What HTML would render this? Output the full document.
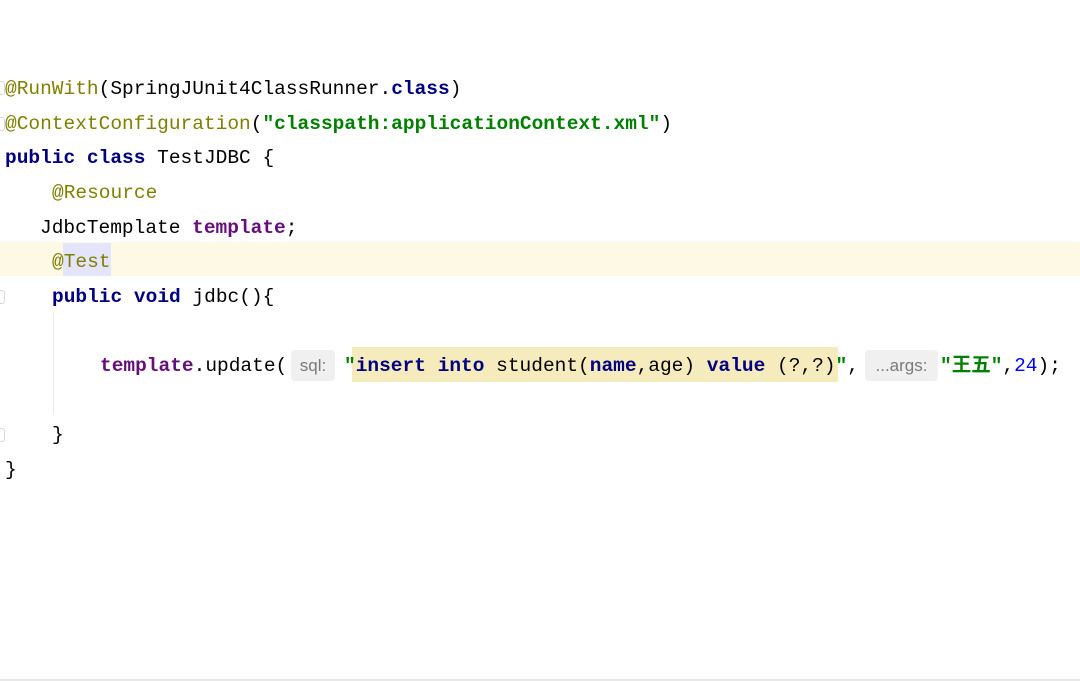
<!DOCTYPE html>
<html><head><meta charset="utf-8"><style>
html,body{margin:0;padding:0;background:#fff;width:1080px;height:681px;overflow:hidden;position:relative}
.l{position:absolute;height:35px;line-height:37px;font-family:"Liberation Mono","Noto Sans CJK SC",monospace;font-size:19.5px;color:#000;white-space:pre}
.an{color:#808000}.kw{color:#000080;font-weight:bold}.st{color:#008000;font-weight:bold}.fd{color:#660e7a;font-weight:bold}.nm{color:#0000ff}
.hl{position:absolute;left:0;top:242px;width:1080px;height:34px;background:#fdf9e4}
.inl{position:absolute;top:350px;height:31px;line-height:31px;background:#f0f0f0;border-radius:4px;color:#7a7a7a;font-family:"Liberation Sans",sans-serif;font-size:17px;text-align:center}
.guide{position:absolute;left:53px;top:312px;width:1px;height:103px;background:#ececec}
.gm{position:absolute;left:0;width:4px;height:12px;border:1px solid #d8d8d8;border-left:none;border-radius:0 3px 3px 0}
</style></head><body>
<div class="hl"></div>
<div style="position:absolute;left:63px;top:243px;width:48px;height:33px;background:#e4e4fc"></div>
<div style="position:absolute;left:352px;top:347px;width:486px;height:35px;background:#f6ebbd"></div>
<div class="guide"></div>
<div class="gm" style="top:81px"></div>
<div class="gm" style="top:117px"></div>
<div class="gm" style="top:290px"></div>
<div class="gm" style="top:428px"></div>
<div class="l" style="left:5px;top:71px"><span class="an">@RunWith</span>(SpringJUnit4ClassRunner.<span class="kw">class</span>)</div>
<div class="l" style="left:5px;top:106px"><span class="an">@ContextConfiguration</span>(<span class="st">"classpath:applicationContext.xml"</span>)</div>
<div class="l" style="left:5px;top:140px"><span class="kw">public class</span> TestJDBC {</div>
<div class="l" style="left:52px;top:175px"><span class="an">@Resource</span></div>
<div class="l" style="left:40px;top:210px">JdbcTemplate <span class="fd">template</span>;</div>
<div class="l" style="left:52px;top:244px"><span class="an">@Test</span></div>
<div class="l" style="left:52px;top:279px"><span class="kw">public void</span> jdbc(){</div>
<div class="l" style="left:100px;top:348px"><span class="fd">template</span>.update(</div>
<div class="inl" style="left:291px;width:44px">sql:</div>
<div class="l" style="left:344px;top:348px"><span class="st">"</span><span class="kw">insert into</span> student(<span class="kw">name</span>,age) <span class="kw">value</span> (?,?)<span class="st">"</span>,</div>
<div class="inl" style="left:865px;width:73px">...args:</div>
<div class="l" style="left:940px;top:348px"><span class="st">"王五"</span>,<span class="nm">24</span>);</div>
<div class="l" style="left:52px;top:417px">}</div>
<div class="l" style="left:5px;top:452px">}</div>
<div style="position:absolute;left:0;top:679px;width:1080px;height:2px;background:#e8e8e8"></div>
</body></html>
